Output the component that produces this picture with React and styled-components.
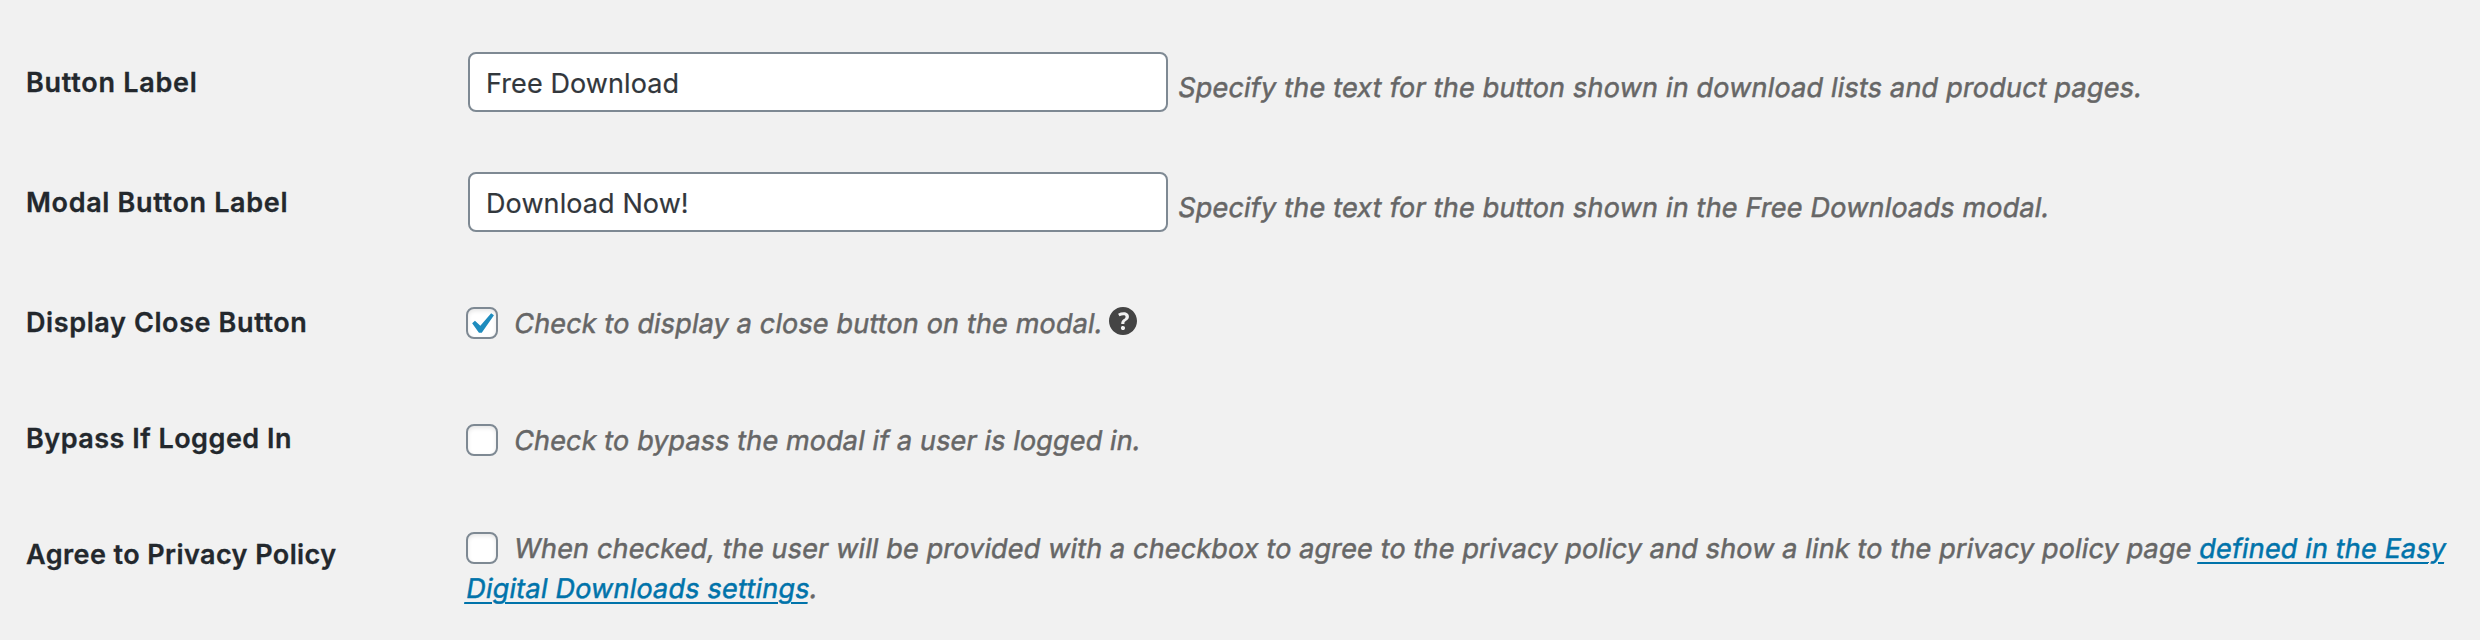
import React from "react";
import styled, { createGlobalStyle } from "styled-components";

const pageColor = "#f1f1f1";
const labelColor = "#23282d";
const inputColor = "#32373c";
const textColor = "#666666";
const borderColor = "#7e8993";
const linkColor = "#0073aa";
const checkColor = "#1e8cbe";
const helpColor = "#444444";

const GlobalStyle = createGlobalStyle`
  * {
    box-sizing: border-box;
  }

  body {
    margin: 0;
    background-color: ${pageColor};
    font-family: Inter, "Liberation Sans", sans-serif;
    font-size: 27px;
  }
`;

const Form = styled.form`
  width: 2480px;
  height: 640px;
  padding-top: 22px;
  overflow: hidden;
`;

const Row = styled.div`
  display: grid;
  grid-template-columns: 440px 1fr;
  height: ${props => props.$height || 116}px;
  padding: 0 26px;
`;

const Label = styled.label`
  padding-top: 41px;
  color: ${labelColor};
  font-weight: 600;
  line-height: 40px;
  letter-spacing: ${props => props.$spacing}px;
  -webkit-text-stroke: 0.3px;
`;

const InputCell = styled.div`
  display: flex;
  align-items: flex-start;
  padding-top: 30px;
`;

const CheckCell = styled.div`
  display: flex;
  flex-wrap: wrap;
  align-items: center;
  align-content: flex-start;
  padding-top: ${props => props.$top}px;
`;

const TextInput = styled.input`
  width: 700px;
  height: 60px;
  margin: 0 10px 0 2px;
  padding: 3px 16px 0;
  border: 2px solid ${borderColor};
  border-radius: 8px;
  background-color: white;
  color: ${inputColor};
  font: inherit;
  letter-spacing: 0.1px;
  outline: none;
  -webkit-text-stroke: 0.2px;
`;

// slanted roman, Inter's own italic has a single-storey a
const Description = styled.span`
  color: ${textColor};
  line-height: 40px;
  letter-spacing: ${props => props.$spacing}px;
  white-space: nowrap;
  -webkit-text-stroke: 0.5px;
  transform: translate(-1px, 1px) skewX(-9.5deg);
  transform-origin: 0 29px;
`;

const InputDescription = styled(Description)`
  margin-top: 15px;
`;

const Link = styled.a`
  color: ${linkColor};
  text-decoration: underline;
  text-decoration-thickness: 2px;
  text-underline-offset: 4px;
`;

const Box = styled.span`
  display: flex;
  width: 32px;
  height: 32px;
  margin-right: 16px;
  border: 2px solid ${borderColor};
  border-radius: 8px;
  background-color: white;
  box-shadow: inset 0 2px 4px rgba(0, 0, 0, 0.1);
`;

const HelpIcon = styled.svg`
  width: 28px;
  height: 28px;
  margin: 0 0 4px 7px;
`;

const Checkbox = ({ checked }) => (
  <Box role="checkbox" aria-checked={!!checked}>
    {checked && (
      <svg width="28" height="28" viewBox="3.81 2.86 13.33 13.33">
        <path
          d="M14.83 4.89l1.34.94-5.81 8.38H9.02L5.78 9.67l1.34-1.25 2.57 2.4z"
          fill={checkColor}
        />
      </svg>
    )}
  </Box>
);

const Help = () => (
  <HelpIcon viewBox="3 3 14 14">
    <path
      d="M17 10c0-3.87-3.14-7-7-7-3.87 0-7 3.13-7 7s3.13 7 7 7c3.86 0 7-3.13 7-7zm-6.3 1.48H9.14v-.43c0-.38.08-.7.24-.98s.46-.57.88-.89c.41-.29.68-.53.81-.71.14-.18.2-.39.2-.62 0-.25-.09-.44-.28-.58-.19-.13-.45-.19-.79-.19-.58 0-1.25.19-2 .57l-.64-1.28c.87-.49 1.8-.74 2.77-.74.81 0 1.45.2 1.92.58.48.39.71.91.71 1.55 0 .43-.09.8-.29 1.11-.19.32-.57.67-1.11 1.06-.38.28-.61.49-.71.63-.1.15-.15.34-.15.57v.35zm-1.47 2.74c-.18-.17-.27-.42-.27-.73 0-.33.08-.58.26-.75s.43-.25.77-.25c.32 0 .57.09.75.26s.27.42.27.74c0 .3-.09.55-.27.72-.18.18-.43.27-.75.27-.33 0-.58-.09-.76-.26z"
      fill={helpColor}
    />
  </HelpIcon>
);

export default () => {
  return (
    <Form>
      <GlobalStyle />
      <Row $height={120}>
        <Label $spacing={0.74}>Button Label</Label>
        <InputCell>
          <TextInput defaultValue="Free Download" />
          <InputDescription $spacing={0.21}>
            Specify the text for the button shown in download lists and product
            pages.
          </InputDescription>
        </InputCell>
      </Row>
      <Row $height={120}>
        <Label $spacing={0.66}>Modal Button Label</Label>
        <InputCell>
          <TextInput defaultValue="Download Now!" />
          <InputDescription $spacing={0.21}>
            Specify the text for the button shown in the Free Downloads modal.
          </InputDescription>
        </InputCell>
      </Row>
      <Row>
        <Label $spacing={0.61}>Display Close Button</Label>
        <CheckCell $top={41}>
          <Checkbox checked />
          <Description $spacing={0.17}>
            Check to display a close button on the modal.
          </Description>
          <Help />
        </CheckCell>
      </Row>
      <Row>
        <Label $spacing={0.49}>Bypass If Logged In</Label>
        <CheckCell $top={42}>
          <Checkbox />
          <Description $spacing={0.14}>
            Check to bypass the modal if a user is logged in.
          </Description>
        </CheckCell>
      </Row>
      <Row>
        <Label $spacing={0.42}>Agree to Privacy Policy</Label>
        <CheckCell $top={34}>
          <Checkbox />
          <Description $spacing={0.165}>
            When checked, the user will be provided with a checkbox to agree to
            the privacy policy and show a link to the privacy policy page{" "}
            <Link>defined in the Easy</Link>
          </Description>
          <Description $spacing={0.23}>
            <Link>Digital Downloads settings</Link>.
          </Description>
        </CheckCell>
      </Row>
    </Form>
  );
};
